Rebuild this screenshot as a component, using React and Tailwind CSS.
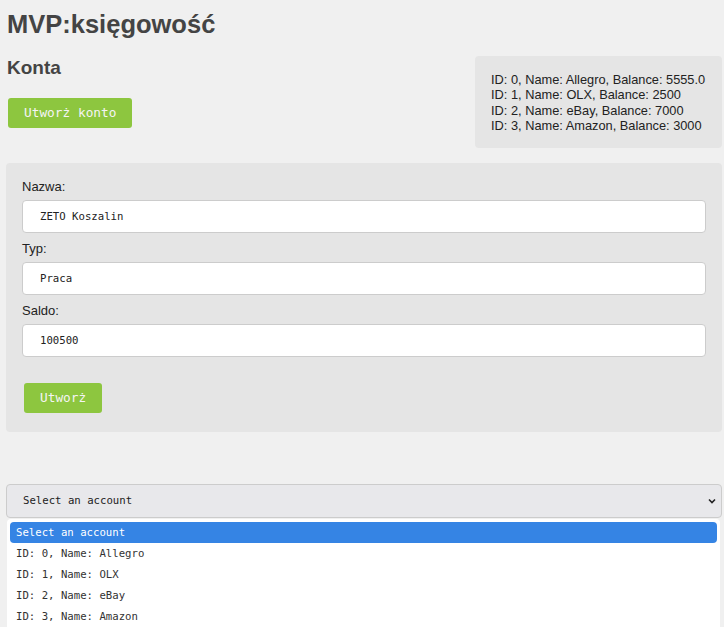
const ACCOUNTS = [
  { id: 0, name: "Allegro", balance: "5555.0" },
  { id: 1, name: "OLX", balance: "2500" },
  { id: 2, name: "eBay", balance: "7000" },
  { id: 3, name: "Amazon", balance: "3000" }
]

const mono = "font-['DejaVu_Sans_Mono',monospace]"

function Field({ label, value }) {
  return (
    <div className="mb-[8px]">
      <div className="text-[13px] leading-[15px] text-[#222] mb-[6px]">{label}</div>
      <div className={`h-[33px] bg-white border border-[#ccc] rounded-[4px] flex items-center pl-[17px] text-[10.67px] text-[#222] ${mono}`}>
        {value}
      </div>
    </div>
  )
}

export default function App() {
  return (
    <div className="min-h-[627px] bg-[#f0f0f0] pl-[6px] pr-[2px] font-['Liberation_Sans',Arial,sans-serif]">
      <h1 className="pt-[9px] pl-[1px] text-[25.5px] leading-[30px] font-bold text-[#444]">MVP:księgowość</h1>

      {/* Konta + lista */}
      <div className="flex justify-between items-start">
        <div>
          <h2 className="mt-[18px] pl-[1px] text-[19px] leading-[22px] font-bold text-[#444]">Konta</h2>
          <button className={`mt-[19px] ml-[2px] h-[30px] px-[16px] bg-[#8dc63f] rounded-[3px] text-[12.8px] text-[#f4f4f4] ${mono}`}>
            Utworż konto
          </button>
        </div>
        <div className="mt-[17px] w-[247px] h-[92px] bg-[#e5e5e5] rounded-[4px] px-[16px] pt-[16px] text-[12.8px] leading-[15.3px] text-[#222] whitespace-nowrap">
          {ACCOUNTS.map(a => (
            <div key={a.id}>ID: {a.id}, Name: {a.name}, Balance: {a.balance}</div>
          ))}
        </div>
      </div>

      {/* Formularz */}
      <div className="mt-[15px] bg-[#e5e5e5] rounded-[4px] px-[16px] pt-[16px] pb-[19px]">
        <Field label="Nazwa:" value="ZETO Koszalin" />
        <Field label="Typ:" value="Praca" />
        <Field label="Saldo:" value="100500" />
        <button className={`mt-[18px] ml-[2px] h-[30px] px-[16px] bg-[#8dc63f] rounded-[3px] text-[12.8px] text-[#f4f4f4] ${mono}`}>
          Utworż
        </button>
      </div>

      {/* Select */}
      <div className="relative mt-[52px]">
        <div className={`h-[34px] bg-[#e8e8eb] border border-[#ccc] rounded-[4px] flex items-center justify-between pl-[16px] pr-[4px] text-[10.67px] text-[#222] ${mono}`}>
          <span>Select an account</span>
          <svg width="10" height="10" viewBox="0 0 10 10" fill="none" stroke="#222" strokeWidth="1.6">
            <path d="M2 3.5 L5 6.5 L8 3.5" />
          </svg>
        </div>
        <div className={`absolute left-[1px] right-[2px] top-[35px] h-[120px] bg-white rounded-t-[4px] pt-[3px] px-[3px] text-[10.67px] text-[#333] ${mono}`}>
          <div className="h-[21px] flex items-center px-[6px] bg-[#3584e4] rounded-[4px] text-white">Select an account</div>
          {ACCOUNTS.map(a => (
            <div key={a.id} className="h-[21px] flex items-center px-[6px]">
              ID: {a.id}, Name: {a.name}
            </div>
          ))}
        </div>
      </div>
    </div>
  )
}
